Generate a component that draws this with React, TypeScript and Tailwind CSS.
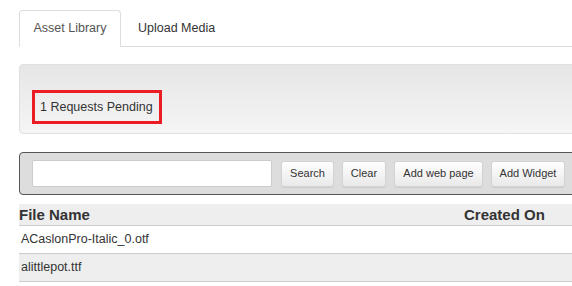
import type { ReactNode } from 'react';

type AssetRow = {
  name: string;
  createdOn: string;
};

const rows: AssetRow[] = [
  { name: 'ACaslonPro-Italic_0.otf', createdOn: '' },
  { name: 'alittlepot.ttf', createdOn: '' },
];

const ToolButton = ({ children, width }: { children: ReactNode; width: string }) => (
  <button
    className={`${width} h-[26px] shrink-0 rounded-[3px] border border-[#d4d4d4] bg-gradient-to-b from-white to-[#e9e9e9] text-[11px] text-[#333] shadow-[0_1px_1px_rgba(0,0,0,0.08)]`}
  >
    {children}
  </button>
);

const App = () => {
  return (
    <div className="w-[572px] h-[286px] overflow-hidden bg-white pl-[19px] pt-[10px] font-['Liberation_Sans',Arial,sans-serif] text-[#333]">
      {/* tabs */}
      <div className="flex w-[600px] h-[37px] border-b border-[#ddd]">
        <div className="-mb-px flex h-[37px] w-[102px] items-center justify-center rounded-t-[4px] border border-[#ddd] border-b-white bg-white text-[12.5px] text-[#555]">
          Asset Library
        </div>
        <div className="ml-[2px] flex h-[36px] items-center px-[15px] text-[12.5px] text-[#333]">
          Upload Media
        </div>
      </div>

      {/* pending well */}
      <div className="mt-[17px] h-[70px] w-[600px] rounded-[4px] border border-[#e0e0e0] bg-gradient-to-b from-[#e6e6e6] to-[#f5f5f5] pl-[12px] pt-[25px]">
        <div className="flex h-[34px] w-[130px] items-center border-[3px] border-[#ec1c24] pl-[5px] text-[12.5px] text-[#333]">
          1 Requests Pending
        </div>
      </div>

      {/* toolbar */}
      <div className="mt-[18px] flex h-[43px] w-[600px] items-center gap-[8px] rounded-[4px] border border-[#555] bg-[#ddd] pl-[12px]">
        <input className="mr-px h-[27px] w-[240px] shrink-0 rounded-[2px] border border-[#ccc] bg-white" />
        <ToolButton width="w-[53px]">Search</ToolButton>
        <ToolButton width="w-[44px]">Clear</ToolButton>
        <ToolButton width="w-[89px]">Add web page</ToolButton>
        <ToolButton width="w-[74px]">Add Widget</ToolButton>
      </div>

      {/* table */}
      <div className="mt-[9px] w-[600px]">
        <div className="grid h-[22px] grid-cols-[445px_1fr] items-center border-b border-[#ccc] bg-[#eee] text-[15px] font-bold text-[#333]">
          <div>File Name</div>
          <div>Created On</div>
        </div>
        {rows.map((row, i) => (
          <div
            key={row.name}
            className={`grid h-[28px] grid-cols-[445px_1fr] items-center border-b border-[#ccc] text-[12.5px] text-[#333] ${
              i % 2 === 1 ? 'bg-[#eee]' : 'bg-white'
            }`}
          >
            <div className="pl-[2px]">{row.name}</div>
            <div>{row.createdOn}</div>
          </div>
        ))}
      </div>
    </div>
  );
};

export default App;
